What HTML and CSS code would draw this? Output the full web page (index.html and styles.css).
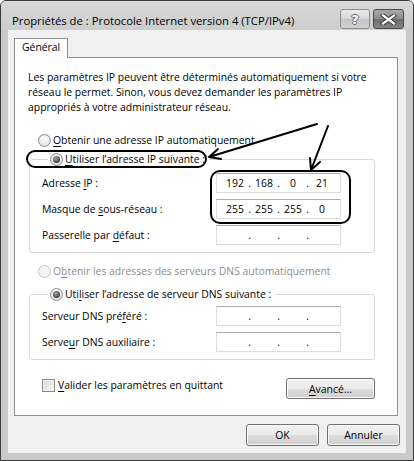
FILE: index.html
```html
<!DOCTYPE html>
<html lang="fr">
<head>
    <meta charset="UTF-8">
    <title>Propriétés de : Protocole Internet version 4 (TCP/IPv4)</title>
    <link rel="stylesheet" href="styles.css">
</head>
<body>
    <div class="window">
        <div class="titlebar">
            <span class="title">Propriétés de : Protocole Internet version 4 (TCP/IPv4)</span>
            <div class="caption-buttons">
                <button class="cap help">?</button>
                <button class="cap close">
                    <svg width="17" height="11" viewBox="0 0 17 11">
                        <path d="M3 1.5 L14 9.5 M14 1.5 L3 9.5" stroke="#3c3c3c" stroke-width="4.2" stroke-linecap="square"/>
                        <path d="M3 1.5 L14 9.5 M14 1.5 L3 9.5" stroke="#fff" stroke-width="2.2" stroke-linecap="square"/>
                    </svg>
                </button>
            </div>
        </div>

        <div class="client">
            <div class="tabs">
                <div class="tab">Général</div>
            </div>

            <div class="panel">
                <p class="intro">Les paramètres IP peuvent être déterminés automatiquement si votre<br>réseau le permet. Sinon, vous devez demander les paramètres IP<br>appropriés à votre administrateur réseau.</p>

                <div class="option">
                    <span class="radio"></span>
                    <span><u>O</u>btenir une adresse IP automatiquement</span>
                </div>

                <fieldset class="group">
                    <legend class="option"><span class="radio checked"></span><span><u>U</u>tiliser l’adresse IP suivante :</span></legend>
                    <div class="fields">
                        <span>Adresse <u>I</u>P :</span>
                        <div class="ipbox"><span class="oct">192</span><span class="dot">.</span><span class="oct">168</span><span class="dot">.</span><span class="oct">0</span><span class="dot">.</span><span class="oct">21</span></div>
                        <span>Masque de <u>s</u>ous-réseau :</span>
                        <div class="ipbox"><span class="oct">255</span><span class="dot">.</span><span class="oct">255</span><span class="dot">.</span><span class="oct">255</span><span class="dot">.</span><span class="oct">0</span></div>
                        <span>Passerelle par <u>d</u>éfaut :</span>
                        <div class="ipbox"><span class="oct"></span><span class="dot">.</span><span class="oct"></span><span class="dot">.</span><span class="oct"></span><span class="dot">.</span><span class="oct"></span></div>
                    </div>
                </fieldset>

                <div class="option disabled">
                    <span class="radio"></span>
                    <span>O<u>b</u>tenir les adresses des serveurs DNS automatiquement</span>
                </div>

                <fieldset class="group dns">
                    <legend class="option"><span class="radio checked"></span><span>Uti<u>l</u>iser l’adresse de serveur DNS suivante :</span></legend>
                    <div class="fields">
                        <span>Serveur DNS pré<u>f</u>éré :</span>
                        <div class="ipbox"><span class="oct"></span><span class="dot">.</span><span class="oct"></span><span class="dot">.</span><span class="oct"></span><span class="dot">.</span><span class="oct"></span></div>
                        <span>Serve<u>u</u>r DNS auxiliaire :</span>
                        <div class="ipbox"><span class="oct"></span><span class="dot">.</span><span class="oct"></span><span class="dot">.</span><span class="oct"></span><span class="dot">.</span><span class="oct"></span></div>
                    </div>
                </fieldset>

                <div class="validate-row">
                    <div class="option check">
                        <span class="checkbox"></span>
                        <span><u>V</u>alider les paramètres en quittant</span>
                    </div>
                    <button class="btn advanced"><u>A</u>vancé...</button>
                </div>
            </div>

            <div class="dialog-buttons">
                <button class="btn">OK</button>
                <button class="btn">Annuler</button>
            </div>
        </div>
    </div>

    <!-- annotations drawn over the dialog -->
    <svg class="marks" width="414" height="461" viewBox="0 0 414 461">
        <g fill="none" stroke="#000" stroke-width="2" stroke-linecap="round" stroke-linejoin="round">
            <rect x="27" y="151" width="179" height="16" rx="8"/>
            <rect x="211" y="171" width="139" height="52" rx="9"/>
            <path d="M317 124 L209 157 M221 159 L209 157 L218 149"/>
            <path d="M328 126 L311 170 M320 162 L311 170 L310 158"/>
        </g>
    </svg>
</body>
</html>
```

FILE: styles.css
```css
* {
    box-sizing: border-box;
}
body {
    margin: 0;
    background: #fff;
    font-family: "Open Sans", "Noto Sans", sans-serif;
    font-size: 10.4px;
    color: #000;
}
u {
    text-decoration-thickness: 1px;
    text-underline-offset: 2px;
}
.window {
    width: 414px;
    height: 461px;
    border: 1px solid #3b3b3b;
    border-radius: 6px 6px 0 0;
    background: #c9c9c9;
    padding: 0 7px 7px 7px;
    display: flex;
    flex-direction: column;
}
.titlebar {
    height: 29px;
    margin: 0 -7px;
    padding: 0 9px 0 11px;
    display: flex;
    align-items: flex-start;
    background: linear-gradient(#d8d8d8, #cdcdcd);
    border-radius: 5px 5px 0 0;
}
.title {
    margin-top: 12px;
    line-height: 16px;
    font-size: 11.3px;
    white-space: nowrap;
}
.caption-buttons {
    margin-left: auto;
    margin-top: 8px;
    display: flex;
    gap: 3px;
}
.cap {
    height: 20px;
    padding: 0;
    border-radius: 3px;
    display: flex;
    align-items: center;
    justify-content: center;
}
.help {
    width: 30px;
    border: 1px solid #8d8d8d;
    background: linear-gradient(#eaeaea, #d6d6d6 50%, #c6c6c6 51%, #cfcfcf);
    color: #fff;
    font-family: "DejaVu Sans", sans-serif;
    font-size: 13px;
    font-weight: bold;
    text-shadow: 1px 0 #6a6a6a, -1px 0 #6a6a6a, 0 1px #6a6a6a, 0 -1px #6a6a6a;
}
.close {
    width: 31px;
    border: 1px solid #4a4a4a;
    background: linear-gradient(#a9a9a9, #8c8c8c 50%, #6c6c6c 51%, #858585);
}

.client {
    flex: 1;
    background: #f0f0f0;
    padding: 8px 6px 0 6px;
}
.tabs {
    display: flex;
}
.tab {
    width: 54px;
    height: 20px;
    margin-bottom: -1px;
    padding-left: 7px;
    line-height: 17px;
    border: 1px solid #8e8e8e;
    border-bottom: none;
    background: #fff;
    position: relative;
    white-space: nowrap;
}
.panel {
    height: 359px;
    margin-right: 2px;
    padding: 0 11px 0 13px;
    border: 1px solid #8e8e8e;
    background: #fff;
    display: flex;
    flex-direction: column;
}
.intro {
    margin: 12px 0 0 0;
    line-height: 15px;
    white-space: nowrap;
}
.option {
    display: flex;
    align-items: center;
    gap: 2px;
    line-height: 16px;
    white-space: nowrap;
}
.panel > .option {
    margin-left: 10px;
}
.panel > .option:first-of-type {
    margin-top: 17px;
}
.radio {
    width: 13px;
    height: 13px;
    border-radius: 50%;
    border: 1px solid #8a8a8a;
    background: radial-gradient(circle at 50% 35%, #fff, #d9d9d9);
    position: relative;
    flex-shrink: 0;
}
.radio.checked::after {
    content: "";
    position: absolute;
    left: 2px;
    top: 2px;
    width: 7px;
    height: 7px;
    border-radius: 50%;
    background: radial-gradient(circle at 40% 35%, #a8a8a8, #3c3c3c 70%);
}
.disabled {
    color: #8d8d8d;
}
.disabled .radio {
    border-color: #c4c4c4;
    background: #f4f4f4;
}
.group {
    margin: 3px 11px 0 1px;
    padding: 6px 0 7px 12px;
    border: 1px solid #d9d9d9;
    border-radius: 3px;
}
.group legend {
    margin-left: 6px;
    padding: 0 4px 0 2px;
    background: #fff;
}
.panel > .option.disabled {
    margin-top: 10px;
}
.group.dns {
    margin-top: 7px;
    padding-top: 4px;
}
.fields {
    display: grid;
    grid-template-columns: 174px 125px;
    row-gap: 6px;
    align-items: center;
    white-space: nowrap;
}
.ipbox {
    height: 20px;
    border: 1px solid #dcdcdc;
    border-top-color: #acacac;
    background: #fff;
    display: flex;
    align-items: center;
    padding-left: 6px;
}
.oct {
    width: 24px;
    text-align: center;
}
.dot {
    width: 5px;
    text-align: center;
}
.validate-row {
    margin: 18px 11px 0 14px;
    display: flex;
    align-items: flex-start;
    justify-content: space-between;
}
.check {
    margin-top: -1px;
    gap: 3px;
}
.checkbox {
    width: 13px;
    height: 13px;
    border: 1px solid #8a8a8a;
    background: linear-gradient(135deg, #d6d6d6, #fafafa);
    box-shadow: inset 0 0 0 1px #f4f4f4;
}
.btn {
    height: 22px;
    padding: 0;
    border: 1px solid #707070;
    border-radius: 3px;
    background: linear-gradient(#f2f2f2, #ebebeb 50%, #dddddd 51%, #cfcfcf);
    font-family: inherit;
    font-size: 10.4px;
    color: #000;
    box-shadow: inset 0 0 0 1px #fbfbfb;
}
.advanced {
    width: 89px;
    height: 21px;
}
.dialog-buttons {
    margin-top: 8px;
    display: flex;
    justify-content: flex-end;
    gap: 8px;
}
.dialog-buttons .btn {
    width: 73px;
}
.marks {
    position: absolute;
    left: 0;
    top: 0;
}
```
